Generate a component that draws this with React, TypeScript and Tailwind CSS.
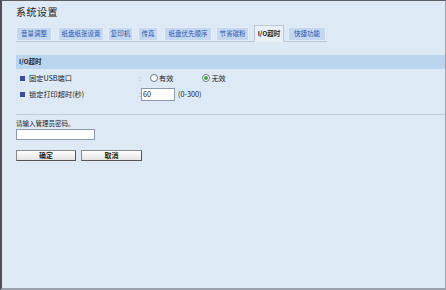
import React from "react";

const tabs: { t: string; w: string; ml: string }[] = [
  { t: "音量调整", w: "w-[36px]", ml: "ml-0" },
  { t: "纸盘纸张设置", w: "w-[46px]", ml: "ml-[6px]" },
  { t: "复印机", w: "w-[25px]", ml: "ml-[4px]" },
  { t: "传真", w: "w-[20px]", ml: "ml-[5px]" },
  { t: "纸盘优先顺序", w: "w-[48px]", ml: "ml-[6px]" },
  { t: "节省碳粉", w: "w-[33px]", ml: "ml-[4px]" },
  { t: "I/O超时", w: "w-[30px]", ml: "ml-[5px]" },
  { t: "快捷功能", w: "w-[38px]", ml: "ml-[4px]" },
];

export default function App() {
  const font = { fontFamily: '"Noto Sans CJK SC", "Noto Sans", sans-serif' };
  return (
    <div className="w-[446px] h-[290px] bg-[#dde9f5] border-l-2 border-l-[#4b5058] border-t border-t-[#5a5f66] border-r border-r-[#9aa3ad] border-b-2 border-b-[#9aa3ad] overflow-hidden flex flex-col" style={font}>
      <div className="pl-[14px] pt-[4px] text-[10px] leading-[14px] text-[#222] tracking-[0.5px] whitespace-nowrap">系统设置</div>
      <div className="ml-[14px] mt-[8px] flex items-end w-[311px] border-b border-[#b9c6d3] h-[15px] whitespace-nowrap">
        {tabs.map(({ t, w, ml }) => {
          const active = t === "I/O超时";
          return (
            <div
              key={t}
              className={
                (active
                  ? "h-[17px] -mb-px flex items-center justify-center bg-[#eaf0f7] border border-[#b9c6d3] border-b-[#eaf0f7] text-[6.5px] font-bold text-[#222] "
                  : "h-[14px] flex items-center justify-center bg-[#c3d8ef] border border-[#e3edf7] text-[6.5px] text-[#2c55b0] ") +
                w +
                " " +
                ml
              }
            >
              {t}
            </div>
          );
        })}
      </div>
      <div className="ml-[14px] mt-[13px] h-[14px] bg-[#bcd5ee] flex items-center pl-[3px] text-[6.5px] font-bold text-[#222] whitespace-nowrap">I/O超时</div>
      <div className="ml-[14px] flex flex-col text-[7.2px] text-[#222] whitespace-nowrap">
        <div className="flex items-center h-[16px] mt-[1px]">
          <span className="ml-[4px] w-[5px] h-[5px] bg-[#3a4ea0]"></span>
          <span className="ml-[4px] w-[110px]">固定USB端口</span>
          <span className="text-[#aaa] w-[11px]">:</span>
          <span className="flex items-center">
            <span className="w-[8px] h-[8px] rounded-full border border-[#6d7a88] bg-white"></span>
            <span className="ml-[1px]">有效</span>
          </span>
          <span className="flex items-center ml-[29px]">
            <span className="w-[8px] h-[8px] rounded-full border border-[#6d7a88] bg-white flex items-center justify-center">
              <span className="w-[4px] h-[4px] rounded-full bg-[#3aa84a]"></span>
            </span>
            <span className="ml-[1px]">无效</span>
          </span>
        </div>
        <div className="flex items-center h-[16px]">
          <span className="ml-[4px] w-[5px] h-[5px] bg-[#3a4ea0]"></span>
          <span className="ml-[4px] w-[110px]">锁定打印超时(秒)</span>
          <span className="text-[#aaa] w-[2px]">:</span>
          <span className="w-[34px] h-[13px] bg-white border border-[#8b9aab] flex items-center pl-[1px]">60</span>
          <span className="ml-[3px]">(0-300)</span>
        </div>
      </div>
      <div className="ml-[14px] mt-[12px] border-t border-[#c2d0de]"></div>
      <div className="ml-[14px] mt-[3px] text-[6.5px] text-[#222] leading-[10px] whitespace-nowrap">请输入管理员密码。</div>
      <div className="ml-[14px] mt-[1px] w-[79px] h-[11px] bg-white border border-[#8b9aab]"></div>
      <div className="ml-[14px] mt-[10px] flex gap-[5px]">
        <div className="w-[60px] h-[11px] bg-gradient-to-b from-white to-[#e4e4e4] border border-[#8a8a8a] border-b-[#555] border-r-[#555] flex items-center justify-center text-[7px] font-bold text-[#222]">确定</div>
        <div className="w-[61px] h-[11px] bg-gradient-to-b from-white to-[#e4e4e4] border border-[#8a8a8a] border-b-[#555] border-r-[#555] flex items-center justify-center text-[7px] font-bold text-[#222]">取消</div>
      </div>
    </div>
  );
}
